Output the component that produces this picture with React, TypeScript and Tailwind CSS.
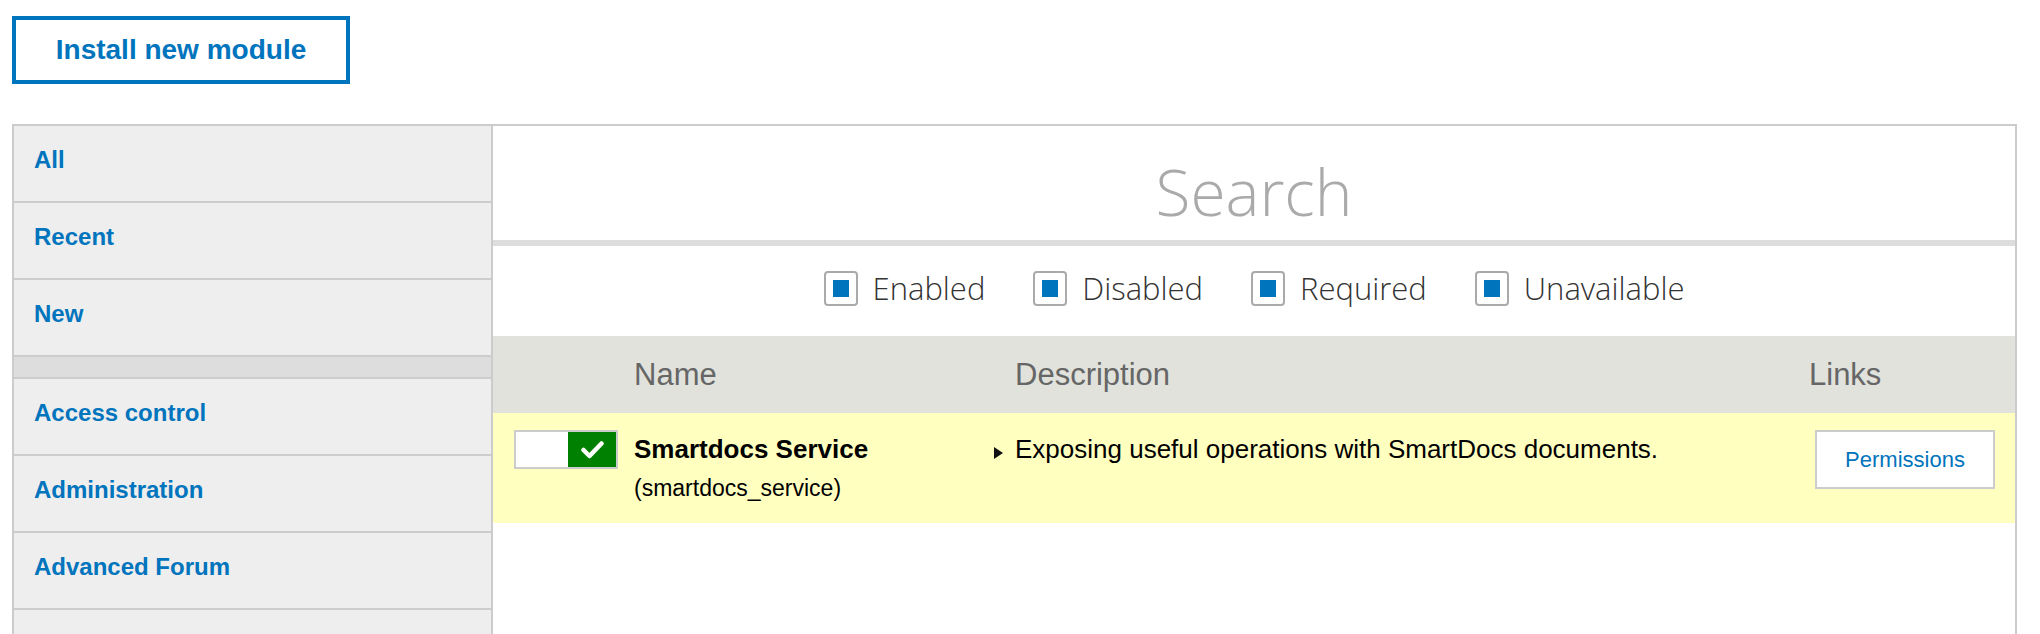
const tabs = ["All", "Recent", "New"];
const packages = ["Access control", "Administration", "Advanced Forum", "Advertising", "Chaos tool suite"];
const filters = ["Enabled", "Disabled", "Required", "Unavailable"];

function SideTab({ label }: { label: string }) {
  return (
    <div className="h-[77px] border-b-2 border-[#ccc] px-5 pt-5">
      <a href="#" className="text-[24px] font-bold leading-[28px] text-[#0074bd]">
        {label}
      </a>
    </div>
  );
}

function FilterCheckbox({ label }: { label: string }) {
  return (
    <label className="flex items-center gap-[15px]">
      <span className="flex h-[35px] w-[34px] items-center justify-center rounded-[4px] border-2 border-[#aaa] bg-white">
        <span className="h-[17px] w-4 bg-[#0074bd]" />
      </span>
      <span className="font-['Open_Sans',sans-serif] text-[31px] font-light leading-9 text-[#333]">{label}</span>
    </label>
  );
}

function Toggle() {
  return (
    <div className="flex h-[39px] w-[104px] border-2 border-[#ccc] bg-white">
      <div className="flex-1" />
      <div className="flex w-12 items-center justify-center bg-[#008000]">
        <svg width="23" height="18" viewBox="0 0 23 18" fill="none">
          <path d="M2.5 9 L8.5 15 L20.5 2.5" stroke="white" strokeWidth="4.5" strokeLinecap="round" strokeLinejoin="round" />
        </svg>
      </div>
    </div>
  );
}

export default function App() {
  return (
    <div className="min-h-screen bg-white pl-3 pr-[23px] pt-4 font-['Liberation_Sans',Arial,sans-serif]">
      <button className="h-[68px] w-[338px] border-4 border-[#0074bd] bg-white text-[28px] font-bold leading-8 text-[#0074bd]">
        Install new module
      </button>

      <div className="mt-10 flex border-x-2 border-t-2 border-[#ccc]">
        <aside className="w-[479px] shrink-0 border-r-2 border-[#ccc] bg-[#eee]">
          {tabs.map((t) => (
            <SideTab key={t} label={t} />
          ))}
          <div className="h-[22px] border-b-2 border-[#ccc] bg-[#ddd]" />
          {packages.map((p) => (
            <SideTab key={p} label={p} />
          ))}
        </aside>

        <main className="flex-1 bg-white">
          <div className="h-[114px] pt-[34px] text-center font-['Open_Sans',sans-serif] text-[64px] font-light leading-[64px] text-[#aaa]">
            Search
          </div>
          <div className="h-[6px] bg-[#ddd]" />
          <div className="flex h-[90px] items-center justify-center gap-12 pb-[6px]">
            {filters.map((f) => (
              <FilterCheckbox key={f} label={f} />
            ))}
          </div>

          <div className="grid h-[77px] grid-cols-[141px_360px_815px_1fr] items-center bg-[#e1e2dc] text-[31px] leading-9 text-[#666]">
            <div />
            <div>Name</div>
            <div className="pl-[21px]">Description</div>
            <div>Links</div>
          </div>

          <div className="grid h-[110px] grid-cols-[141px_360px_815px_1fr] bg-[#ffffc0]">
            <div className="pl-[21px] pt-[17px]">
              <Toggle />
            </div>
            <div className="pt-[21px] text-black">
              <div className="text-[26px] font-bold leading-[30px]">Smartdocs Service</div>
              <div className="mt-[9px] text-[23px] leading-[30px]">(smartdocs_service)</div>
            </div>
            <div className="flex items-start gap-3 pt-[21px] text-[26px] leading-[30px] text-black">
              <svg width="9" height="12" viewBox="0 0 9 12" className="mt-[13px] shrink-0">
                <polygon points="0,0 9,6 0,12" fill="#111" />
              </svg>
              <span>Exposing useful operations with SmartDocs documents.</span>
            </div>
            <div className="pl-[6px] pt-[17px]">
              <a href="#" className="flex h-[59px] w-[180px] items-center justify-center border-2 border-[#ccc] bg-white text-[22px] text-[#0074bd]">
                Permissions
              </a>
            </div>
          </div>
        </main>
      </div>
    </div>
  );
}
